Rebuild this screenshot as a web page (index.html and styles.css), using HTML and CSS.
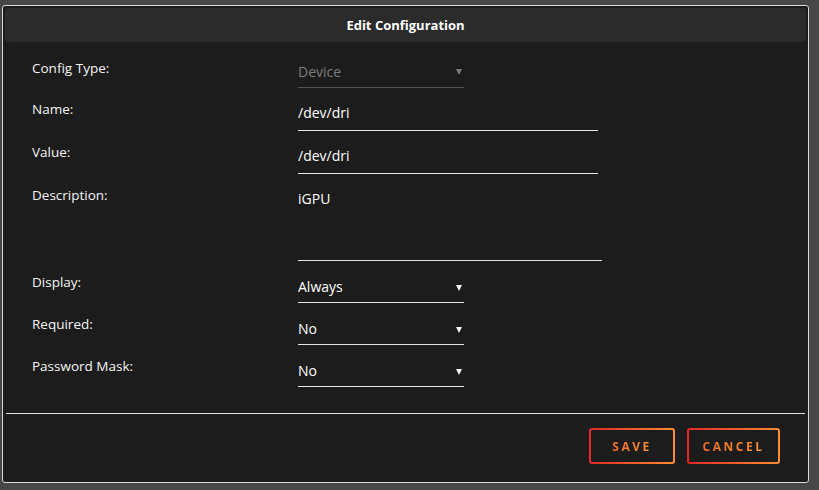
FILE: index.html
```html
<!DOCTYPE html>
<html lang="en">

<head>
  <meta charset="UTF-8">
  <meta name="viewport" content="width=device-width, initial-scale=1.0">
  <title>Edit Configuration</title>
  <link rel="stylesheet" href="styles.css">
</head>

<body>
  <div class="dialog">
    <div class="dialog-title">Edit Configuration</div>

    <form class="config-form">
      <div class="form-row">
        <label class="form-label">Config Type:</label>
        <div class="select-wrap select-disabled">
          <select disabled>
            <option>Device</option>
          </select>
          <span class="caret"></span>
        </div>
      </div>

      <div class="form-row">
        <label class="form-label">Name:</label>
        <input class="text-input" type="text" value="/dev/dri">
      </div>

      <div class="form-row">
        <label class="form-label">Value:</label>
        <input class="text-input" type="text" value="/dev/dri">
      </div>

      <div class="form-row">
        <label class="form-label">Description:</label>
        <textarea class="text-area">iGPU</textarea>
      </div>

      <div class="form-row">
        <label class="form-label">Display:</label>
        <div class="select-wrap">
          <select>
            <option>Always</option>
            <option>Advanced</option>
            <option>Hide</option>
          </select>
          <span class="caret"></span>
        </div>
      </div>

      <div class="form-row">
        <label class="form-label">Required:</label>
        <div class="select-wrap">
          <select>
            <option>No</option>
            <option>Yes</option>
          </select>
          <span class="caret"></span>
        </div>
      </div>

      <div class="form-row">
        <label class="form-label">Password Mask:</label>
        <div class="select-wrap">
          <select>
            <option>No</option>
            <option>Yes</option>
          </select>
          <span class="caret"></span>
        </div>
      </div>
    </form>

    <hr class="divider">

    <div class="dialog-buttons">
      <button class="btn btn-save" type="button"><span>SAVE</span></button>
      <button class="btn btn-cancel" type="button"><span>CANCEL</span></button>
    </div>
  </div>
</body>

</html>
```

FILE: styles.css
```css
body {
  margin: 0;
  background: #474747;
  font-family: "Open Sans", "Noto Sans", sans-serif;
  color: #f2f2f2;
}

.dialog {
  box-sizing: border-box;
  width: 807px;
  height: 478px;
  margin: 5px 0 0 2px;
  padding: 2px;
  border: 1px solid #d9d9d9;
  border-radius: 3px;
  background: #1c1c1c;
  display: flex;
  flex-direction: column;
}

.dialog-title {
  height: 34px;
  line-height: 34px;
  background: #2b2b2b;
  border-radius: 4px;
  text-align: center;
  font-size: 13px;
  font-weight: bold;
  color: #fff;
}

.config-form {
  padding: 16px 0 0 27px;
}

.form-row {
  display: flex;
  align-items: flex-start;
  margin-bottom: 11px;
}

.form-row:last-child {
  margin-bottom: 0;
}

.form-label {
  width: 266px;
  flex: none;
  font-size: 13.5px;
  line-height: 20px;
  color: #f4f4f4;
}

.text-input,
.text-area,
.select-wrap select {
  box-sizing: content-box;
  margin: 0;
  padding: 4px 0 7px;
  border: none;
  border-bottom: 1px solid #e6e6e6;
  background: transparent;
  color: #fff;
  font-family: inherit;
  font-size: 14px;
  line-height: 20px;
  height: 20px;
  outline: none;
}

.text-input {
  width: 300px;
}

.text-area {
  width: 304px;
  height: 64px;
  resize: none;
}

.select-wrap {
  position: relative;
}

.select-wrap select {
  -webkit-appearance: none;
  appearance: none;
  width: 166px;
  padding: 5px 0;
}

.select-disabled select {
  padding: 4px 0 5px;
  color: #7c7c7c;
  border-bottom-color: #555;
  opacity: 1;
}

.caret {
  position: absolute;
  right: 2px;
  top: 13px;
  width: 0;
  height: 0;
  border-left: 3px solid transparent;
  border-right: 3px solid transparent;
  border-top: 6px solid #f2f2f2;
  pointer-events: none;
}

.select-disabled .caret {
  top: 11px;
  border-top-color: #7c7c7c;
}

.divider {
  margin: 26px 1px 0;
  border: none;
  border-top: 1px solid #e0e0e0;
  height: 0;
}

.dialog-buttons {
  display: flex;
  justify-content: flex-end;
  gap: 12px;
  padding: 14px 26px 0 0;
}

.btn {
  box-sizing: border-box;
  height: 36px;
  padding: 0;
  border: 2px solid transparent;
  border-radius: 3px;
  background: linear-gradient(#1c1c1c, #1c1c1c) padding-box,
    linear-gradient(90deg, #e22828, #ff8c2f) border-box;
  font-family: inherit;
  font-size: 12px;
  font-weight: bold;
  letter-spacing: 2.5px;
  cursor: pointer;
}

.btn span {
  background: linear-gradient(90deg, #f26a2a, #ff9232);
  -webkit-background-clip: text;
  background-clip: text;
  color: transparent;
}

.btn-save {
  width: 86px;
}

.btn-cancel {
  width: 93px;
}
```
